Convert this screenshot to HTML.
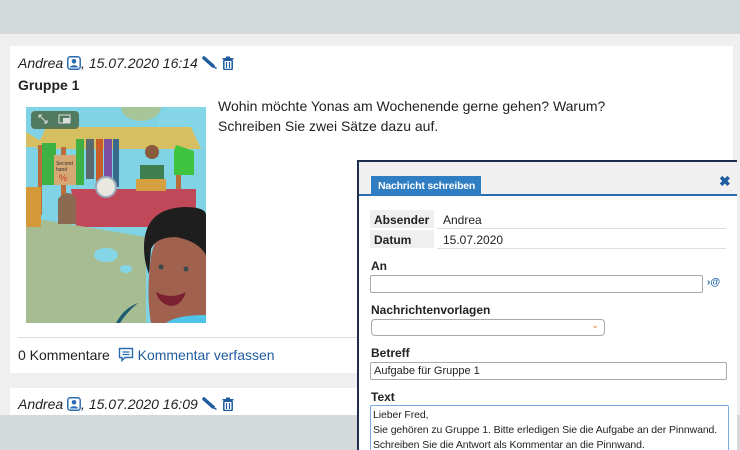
<!DOCTYPE html>
<html><head><meta charset="utf-8"><style>
*{margin:0;padding:0;box-sizing:border-box}
html,body{width:740px;height:450px;overflow:hidden}
body{background:#efefef;font-family:"Liberation Sans",sans-serif;color:#222;position:relative}
.top{position:absolute;left:0;top:0;width:740px;height:34px;background:#d4d9dc}
.bot{position:absolute;left:0;top:415px;width:740px;height:35px;background:#d4d9dc}
.card{position:absolute;left:10px;width:723px;background:#fff}
.hdr{position:absolute;left:8px;font-style:italic;font-size:14px;color:#222;white-space:nowrap}
.ic{display:inline-block;vertical-align:-2px}
.abs{position:absolute;white-space:nowrap}
.dlg{position:absolute;left:357px;top:160px;width:380px;height:290px;background:#fff;border-left:2px solid #1c2d4f;border-top:2px solid #1c2d4f;overflow:hidden}
.lbl{position:absolute;font-weight:bold;font-size:12px;color:#222}
.inp{position:absolute;border:1px solid #aaa;border-radius:2px;background:#fff;font-size:11px;padding:2px 3px}
</style></head><body>
<div class="top"></div>
<div class="card" style="top:46px;height:327px">
 <div class="hdr" style="top:9px">Andrea <svg class="ic" width="14" height="14" viewBox="0 0 14 14"><rect x="0.8" y="0.8" width="12.4" height="12.4" rx="2.5" fill="#fff" stroke="#2a6cb0" stroke-width="1.5"/><circle cx="7" cy="5.3" r="2.3" fill="#2a6cb0"/><path d="M3 11.5c0-3 8-3 8 0z" fill="#2a6cb0"/></svg>, 15.07.2020 16:14 <svg class="ic" width="16" height="14" viewBox="0 0 16 14"><path d="M2 2l9 8" stroke="#1f5c9e" stroke-width="3.5" stroke-linecap="round"/><path d="M11.5 10.5l3 2" stroke="#1f5c9e" stroke-width="1.5"/></svg> <svg class="ic" width="12" height="14" viewBox="0 0 12 14"><rect x="0.5" y="2" width="11" height="1.6" fill="#1f5c9e"/><rect x="4" y="0.5" width="4" height="2" fill="#1f5c9e"/><rect x="1.8" y="4.2" width="8.4" height="9.3" rx="1" fill="none" stroke="#1f5c9e" stroke-width="1.5"/><path d="M4.5 6v6M7.5 6v6" stroke="#1f5c9e" stroke-width="1.2"/></svg></div>
 <div class="abs" style="left:8px;top:31px;font-weight:bold;font-size:14px">Gruppe 1</div>
 <svg class="abs" style="left:16px;top:61px" width="180" height="216" viewBox="0 0 180 216">
  <rect width="180" height="216" fill="#7fd3e4"/>
  <ellipse cx="115" cy="0" rx="20" ry="14" fill="#a8c59a"/>
  <ellipse cx="160" cy="20" rx="28" ry="28" fill="#84d6e6"/>
  <path d="M20 20h145l10 22H10z" fill="#d5bf60"/>
  <path d="M0 25l25 15H0z" fill="#d5bf60"/>
  <rect x="35" y="40" width="5" height="80" fill="#b86d3a"/><rect x="150" y="40" width="5" height="80" fill="#b86d3a"/>
  <rect x="12" y="38" width="4" height="70" fill="#b86d3a"/>
  <rect x="50" y="32" width="8" height="46" fill="#3fb043"/><rect x="60" y="32" width="8" height="40" fill="#5a6a70"/><rect x="70" y="32" width="7" height="50" fill="#c85c2a"/><rect x="78" y="32" width="8" height="42" fill="#7b4ea0"/><rect x="87" y="32" width="6" height="48" fill="#3a6a8a"/>
  <rect x="16" y="36" width="14" height="42" fill="#3fb043"/>
  <rect x="28" y="48" width="22" height="30" fill="#d6a873"/>
  <text x="30" y="58" font-size="5" font-family="Liberation Sans" fill="#333">Second</text>
  <text x="30" y="64" font-size="5" font-family="Liberation Sans" fill="#333">hand</text>
  <text x="33" y="74" font-size="9" font-family="Liberation Sans" fill="#c33">%</text>
  <path d="M150 38l18 6v24h-20v-24z" fill="#3fc43f"/>
  <circle cx="126" cy="45" r="7" fill="#8a5a3a"/><path d="M114 58h24v28h-24z" fill="#3f7f4f"/>
  <path d="M45 82h125v30l-30 8H50z" fill="#c04858"/>
  <ellipse cx="80" cy="80" rx="10" ry="10" fill="#e8e8e0" stroke="#9ab" stroke-width="2"/>
  <rect x="110" y="72" width="30" height="12" fill="#d4a040"/>
  <path d="M0 110q60 10 120 20v86H0z" fill="#a6bd94"/>
  <path d="M0 80h15v40H0z" fill="#d49a3a"/>
  <path d="M32 92q10-12 18 0v25H32z" fill="#8a6a50"/>
  <ellipse cx="80" cy="148" rx="12" ry="7" fill="#84d6e6"/>
  <ellipse cx="100" cy="162" rx="6" ry="4" fill="#84d6e6"/>
  <path d="M125 150q5-30 30-30h25v96h-55q-5-30 0-66z" fill="#a0624e"/>
  <path d="M118 140q0-38 40-40q22 0 22 8v40q-8-14-30-18q-20 0-25 12l-2 25q-5-12-5-27z" fill="#1e1e1e"/>
  <circle cx="135" cy="160" r="2.5" fill="#3a4a50"/><circle cx="160" cy="162" r="2.5" fill="#3a4a50"/>
  <path d="M130 185q15 8 30 0q-5 14-15 14q-12-2-15-14z" fill="#7a2030"/>
  <path d="M140 216q10-8 40-8v8z" fill="#4fc3e8"/>
  <path d="M90 216q8-15 22-20q-12 10-18 20z" fill="#1f5c70"/>
  <rect x="5" y="4" width="48" height="18" rx="4" fill="#4a6a4a" opacity=".85"/>
  <path d="M13 8l8 8M13 8v3M13 8h3M21 16h-3M21 16v-3" stroke="#ddd" stroke-width="1"/>
  <rect x="33" y="8" width="11" height="8" fill="none" stroke="#ddd"/><rect x="37" y="11" width="7" height="5" fill="#ddd"/>
 </svg>
 <div class="abs" style="left:208px;top:50px;font-size:14px;line-height:20px;color:#222">Wohin möchte Yonas am Wochenende gerne gehen? Warum?<br>Schreiben Sie zwei Sätze dazu auf.</div>
 <div class="abs" style="left:8px;top:291px;width:715px;height:1px;background:#ddd"></div>
 <div class="abs" style="left:8px;top:301px;font-size:14px">0 Kommentare <svg class="ic" width="16" height="15" viewBox="0 0 16 15" style="margin-left:4px"><path d="M1.5 1.5h13v9H7l-3 3v-3H1.5z" fill="none" stroke="#2a6cb0" stroke-width="1.4"/><path d="M4.5 5h7M4.5 7.5h7" stroke="#2a6cb0" stroke-width="1.2"/></svg> <span style="color:#1f5c9e">Kommentar verfassen</span></div>
</div>
<div class="card" style="top:388px;height:27px">
 <div class="hdr" style="top:8px">Andrea <svg class="ic" width="14" height="14" viewBox="0 0 14 14"><rect x="0.8" y="0.8" width="12.4" height="12.4" rx="2.5" fill="#fff" stroke="#2a6cb0" stroke-width="1.5"/><circle cx="7" cy="5.3" r="2.3" fill="#2a6cb0"/><path d="M3 11.5c0-3 8-3 8 0z" fill="#2a6cb0"/></svg>, 15.07.2020 16:09 <svg class="ic" width="16" height="14" viewBox="0 0 16 14"><path d="M2 2l9 8" stroke="#1f5c9e" stroke-width="3.5" stroke-linecap="round"/><path d="M11.5 10.5l3 2" stroke="#1f5c9e" stroke-width="1.5"/></svg> <svg class="ic" width="12" height="14" viewBox="0 0 12 14"><rect x="0.5" y="2" width="11" height="1.6" fill="#1f5c9e"/><rect x="4" y="0.5" width="4" height="2" fill="#1f5c9e"/><rect x="1.8" y="4.2" width="8.4" height="9.3" rx="1" fill="none" stroke="#1f5c9e" stroke-width="1.5"/><path d="M4.5 6v6M7.5 6v6" stroke="#1f5c9e" stroke-width="1.2"/></svg></div>
</div>
<div class="bot"></div>
<div class="dlg">
 <div class="abs" style="left:0;top:0;width:378px;height:34px;background:#f0f0f0;border-bottom:2px solid #2a6cb0"></div>
 <div class="abs" style="left:12px;top:14px;height:20px;background:#2f7dc2;color:#fff;font-weight:bold;font-size:10.5px;padding:4px 6px 0 7px;letter-spacing:-0.2px">Nachricht schreiben</div>
 <div class="abs" style="left:360px;top:11px;color:#1f5c9e;font-weight:bold;font-size:14px">✖</div>
 <div class="abs" style="left:11px;top:48px;width:64px;height:18px;background:#efefef"></div>
 <div class="abs" style="left:11px;top:68px;width:64px;height:18px;background:#efefef"></div>
 <div class="lbl" style="left:15px;top:51px">Absender</div>
 <div class="lbl" style="left:15px;top:71px">Datum</div>
 <div class="abs" style="left:84px;top:51px;font-size:12px">Andrea</div>
 <div class="abs" style="left:84px;top:71px;font-size:12px">15.07.2020</div>
 <div class="abs" style="left:78px;top:66px;width:289px;height:1px;background:#ddd"></div>
 <div class="abs" style="left:78px;top:86px;width:289px;height:1px;background:#ddd"></div>
 <div class="lbl" style="left:12px;top:97px">An</div>
 <div class="inp" style="left:11px;top:113px;width:333px;height:18px"></div>
 <div class="abs" style="left:348px;top:115px;font-size:10px;color:#2a6cb0;font-weight:bold">›@</div>
 <div class="lbl" style="left:12px;top:141px">Nachrichtenvorlagen</div>
 <div class="inp" style="left:12px;top:157px;width:234px;height:17px;border-radius:4px"><span style="position:absolute;right:5px;top:0;color:#e87a2a;font-size:9px">⌄</span></div>
 <div class="lbl" style="left:12px;top:184px">Betreff</div>
 <div class="inp" style="left:11px;top:200px;width:357px;height:18px">Aufgabe für Gruppe 1</div>
 <div class="lbl" style="left:12px;top:228px">Text</div>
 <div class="inp" style="left:11px;top:243px;width:359px;height:60px;border:1px solid #7aa8e0;line-height:15px;padding:2px 2px;font-size:10.5px;white-space:nowrap;letter-spacing:-0.1px">Lieber Fred,<br>Sie gehören zu Gruppe 1. Bitte erledigen Sie die Aufgabe an der Pinnwand.<br>Schreiben Sie die Antwort als Kommentar an die Pinnwand.</div>
</div>
</body></html>
